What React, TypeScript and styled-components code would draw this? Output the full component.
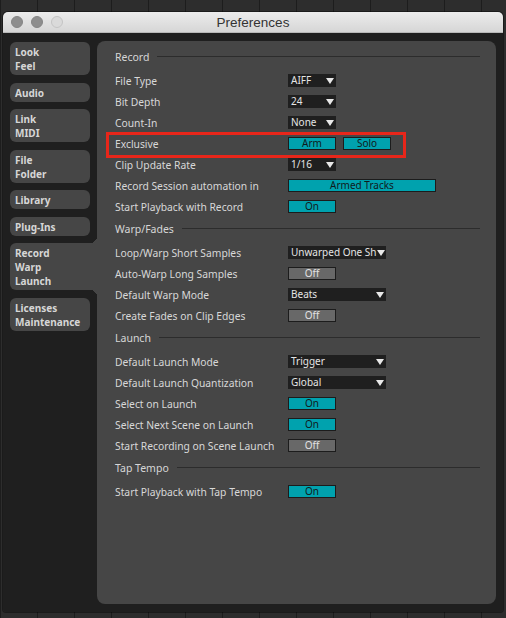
import styled, { createGlobalStyle } from "styled-components";

// 💡 one row per preference: a label and a control
type Control =
    | { kind: "select"; value: string; width?: number }
    | { kind: "toggle"; on: boolean; label?: string; width?: number }
    | { kind: "pair"; items: string[] };

interface IRow {
    label: string;
    control: Control;
}

interface ISection {
    title: string;
    rows: IRow[];
}

const tabs = [
    { lines: ["Look", "Feel"] },
    { lines: ["Audio"] },
    { lines: ["Link", "MIDI"] },
    { lines: ["File", "Folder"] },
    { lines: ["Library"] },
    { lines: ["Plug-Ins"] },
    { lines: ["Record", "Warp", "Launch"], active: true },
    { lines: ["Licenses", "Maintenance"] },
];

const sections: ISection[] = [
    {
        title: "Record",
        rows: [
            { label: "File Type", control: { kind: "select", value: "AIFF" } },
            { label: "Bit Depth", control: { kind: "select", value: "24" } },
            { label: "Count-In", control: { kind: "select", value: "None" } },
            { label: "Exclusive", control: { kind: "pair", items: ["Arm", "Solo"] } },
            { label: "Clip Update Rate", control: { kind: "select", value: "1/16" } },
            {
                label: "Record Session automation in",
                control: { kind: "toggle", on: true, label: "Armed Tracks", width: 148 },
            },
            { label: "Start Playback with Record", control: { kind: "toggle", on: true } },
        ],
    },
    {
        title: "Warp/Fades",
        rows: [
            {
                label: "Loop/Warp Short Samples",
                control: { kind: "select", value: "Unwarped One Sh", width: 98 },
            },
            { label: "Auto-Warp Long Samples", control: { kind: "toggle", on: false } },
            { label: "Default Warp Mode", control: { kind: "select", value: "Beats", width: 98 } },
            { label: "Create Fades on Clip Edges", control: { kind: "toggle", on: false } },
        ],
    },
    {
        title: "Launch",
        rows: [
            { label: "Default Launch Mode", control: { kind: "select", value: "Trigger", width: 98 } },
            {
                label: "Default Launch Quantization",
                control: { kind: "select", value: "Global", width: 98 },
            },
            { label: "Select on Launch", control: { kind: "toggle", on: true } },
            { label: "Select Next Scene on Launch", control: { kind: "toggle", on: true } },
            { label: "Start Recording on Scene Launch", control: { kind: "toggle", on: false } },
        ],
    },
    {
        title: "Tap Tempo",
        rows: [{ label: "Start Playback with Tap Tempo", control: { kind: "toggle", on: true } }],
    },
];

const renderControl = (c: Control) => {
    if (c.kind === "select") {
        return (
            <Select $width={c.width ?? 48}>
                <span>{c.value}</span>
                <Arrow />
            </Select>
        );
    }
    if (c.kind === "pair") {
        return (
            <Pair>
                {c.items.map((item) => (
                    <Toggle key={item} $on $width={48}>
                        {item}
                    </Toggle>
                ))}
            </Pair>
        );
    }
    return (
        <Toggle $on={c.on} $width={c.width ?? 48}>
            {c.label ?? (c.on ? "On" : "Off")}
        </Toggle>
    );
};

const App = () => {
    return (
        <>
            <GlobalStyle />
            <Desktop>
                <Window>
                    <TitleBar>
                        <Lights>
                            <Light />
                            <Light />
                            <Light $dim />
                        </Lights>
                        <Title>Preferences</Title>
                        <span />
                    </TitleBar>
                    <Body>
                        <Sidebar>
                            {tabs.map((tab) => (
                                <Tab key={tab.lines[0]} $active={!!tab.active}>
                                    {tab.lines.map((line) => (
                                        <div key={line}>{line}</div>
                                    ))}
                                </Tab>
                            ))}
                        </Sidebar>
                        <Panel>
                            {sections.map((section) => (
                                <div key={section.title}>
                                    <SectionHeader>
                                        <span>{section.title}</span>
                                        <Rule />
                                    </SectionHeader>
                                    {section.rows.map((row) => (
                                        <Row key={row.label}>
                                            <Label>{row.label}</Label>
                                            {renderControl(row.control)}
                                        </Row>
                                    ))}
                                </div>
                            ))}
                            {/* 💡 red annotation box drawn over the Exclusive row */}
                            <Highlight />
                        </Panel>
                    </Body>
                </Window>
            </Desktop>
        </>
    );
};

const GlobalStyle = createGlobalStyle`
    body {
        margin: 0;
        background: #2b2b2b;
        font-family: "Noto Sans", "Liberation Sans", sans-serif;
    }
`;

const Desktop = styled.div`
    width: 506px;
    height: 618px;
    box-sizing: border-box;
    padding: 12px 3px 6px 3px;
    display: flex;
    background-color: #2d2d2d;
    background-image: linear-gradient(90deg, rgba(0, 0, 0, 0.35) 1px, transparent 1px);
    background-size: 37px 100%;
`;

const Window = styled.div`
    flex: 1;
    display: flex;
    flex-direction: column;
    border-radius: 5px 5px 3px 3px;
    overflow: hidden;
    box-shadow: 0 0 0 1px rgba(0, 0, 0, 0.4);
`;

const TitleBar = styled.div`
    height: 21px;
    flex-shrink: 0;
    display: grid;
    grid-template-columns: 1fr auto 1fr;
    align-items: center;
    background: linear-gradient(#ececec, #d6d6d6);
    border-bottom: 1px solid #b8b8b8;
    box-sizing: border-box;
`;

const Lights = styled.div`
    display: flex;
    gap: 8px;
    padding-left: 8px;
`;

const Light = styled.div<{ $dim?: boolean }>`
    width: 12px;
    height: 12px;
    border-radius: 50%;
    box-sizing: border-box;
    background: ${(p) => (p.$dim ? "#dadada" : "#8e8e8e")};
    border: 1px solid ${(p) => (p.$dim ? "#c4c4c4" : "#858585")};
`;

const Title = styled.div`
    font-family: "Liberation Sans", sans-serif;
    font-size: 13.5px;
    color: #333;
`;

const Body = styled.div`
    flex: 1;
    display: flex;
    background: #1f1f1f;
    padding: 8px 7px 8px 7px;
`;

const Sidebar = styled.div`
    width: 87px;
    flex-shrink: 0;
    display: flex;
    flex-direction: column;
    gap: 7.5px;
    padding-top: 1px;
`;

const Tab = styled.div<{ $active: boolean }>`
    position: relative;
    width: ${(p) => (p.$active ? "87px" : "80px")};
    box-sizing: border-box;
    padding: 3px 5px 2px;
    background: #464646;
    border-radius: ${(p) => (p.$active ? "6px 0 0 6px" : "6px")};
    font-size: 10px;
    font-weight: 700;
    line-height: 14px;
    color: #d6d6d6;
    &::before,
    &::after {
        content: "";
        display: ${(p) => (p.$active ? "block" : "none")};
        position: absolute;
        right: 0;
        width: 7px;
        height: 7px;
    }
    &::before {
        top: -7px;
        background: radial-gradient(circle at 0 0, transparent 7px, #464646 7px);
    }
    &::after {
        bottom: -7px;
        background: radial-gradient(circle at 0 100%, transparent 7px, #464646 7px);
    }
`;

const Panel = styled.div`
    position: relative;
    flex: 1;
    background: #464646;
    border-radius: 8px;
    padding: 4px 16px 0 18px;
`;

const SectionHeader = styled.div`
    height: 25px;
    padding-bottom: 2px;
    box-sizing: border-box;
    display: flex;
    align-items: center;
    gap: 8px;
    font-size: 10.5px;
    color: #d6d6d6;
`;

const Rule = styled.div`
    flex: 1;
    height: 1px;
    background: #2c2c2c;
`;

const Row = styled.div`
    height: 21px;
    display: grid;
    grid-template-columns: 173px auto;
    align-items: center;
`;

const Label = styled.div`
    font-size: 10.3px;
    color: #d8d8d8;
    white-space: nowrap;
`;

const Select = styled.div<{ $width: number }>`
    width: ${(p) => p.$width}px;
    height: 13px;
    box-sizing: border-box;
    display: flex;
    align-items: center;
    justify-content: space-between;
    padding: 0 2px 0 3px;
    background: #1f1f1f;
    color: #e4e4e4;
    font-size: 10px;
    line-height: 13px;
    white-space: nowrap;
    overflow: hidden;
`;

const Arrow = styled.span`
    width: 0;
    height: 0;
    flex-shrink: 0;
    border-left: 4px solid transparent;
    border-right: 4px solid transparent;
    border-top: 6px solid #e8e8e8;
`;

const Toggle = styled.div<{ $on: boolean; $width: number }>`
    width: ${(p) => p.$width}px;
    height: 13px;
    box-sizing: border-box;
    border: 1px solid #1c1c1c;
    background: ${(p) => (p.$on ? "#00a2ae" : "#686868")};
    color: ${(p) => (p.$on ? "#101a1c" : "#e2e2e2")};
    font-size: 10px;
    line-height: 11px;
    text-align: center;
    white-space: nowrap;
`;

const Pair = styled.div`
    display: flex;
    gap: 7px;
`;

const Highlight = styled.div`
    position: absolute;
    left: 9px;
    top: 91px;
    width: 300px;
    height: 26px;
    box-sizing: border-box;
    border: 3px solid #e8261a;
    pointer-events: none;
`;

export default App;
